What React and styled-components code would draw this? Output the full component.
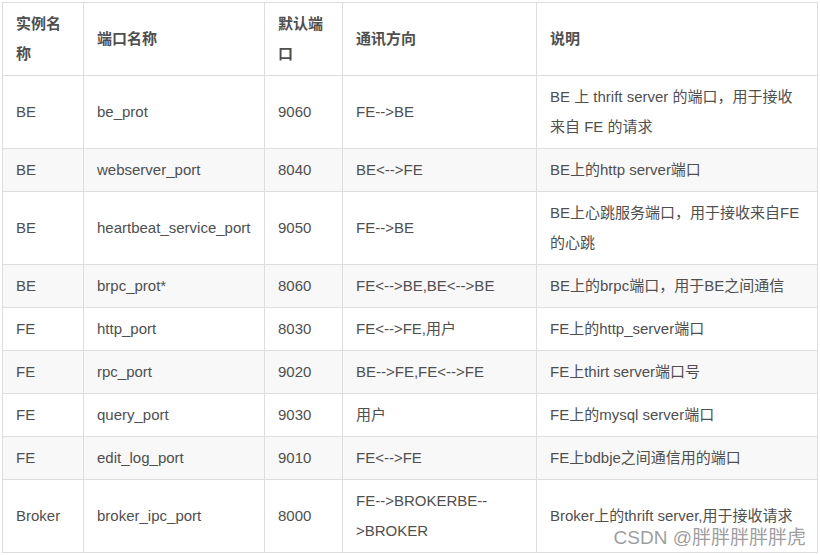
import React from 'react';
import styled, { createGlobalStyle } from 'styled-components';

const GlobalStyle = createGlobalStyle`
	html, body {
		margin: 0;
		padding: 0;
		background: #ffffff;
	}
	body {
		font-family: "Liberation Sans", Arial, "Noto Sans CJK SC", sans-serif;
	}
`;

const columns = [81, 181, 78, 194, 281];

const headers = ['实例名称', '端口名称', '默认端口', '通讯方向', '说明'];

const rows = [
	['BE', 'be_prot', '9060', 'FE-->BE', 'BE 上 thrift server 的端口，用于接收来自 FE 的请求'],
	['BE', 'webserver_port', '8040', 'BE<-->FE', 'BE上的http server端口'],
	['BE', 'heartbeat_service_port', '9050', 'FE-->BE', 'BE上心跳服务端口，用于接收来自FE的心跳'],
	['BE', 'brpc_prot*', '8060', 'FE<-->BE,BE<-->BE', 'BE上的brpc端口，用于BE之间通信'],
	['FE', 'http_port', '8030', 'FE<-->FE,用户', 'FE上的http_server端口'],
	['FE', 'rpc_port', '9020', 'BE-->FE,FE<-->FE', 'FE上thirt server端口号'],
	['FE', 'query_port', '9030', '用户', 'FE上的mysql server端口'],
	['FE', 'edit_log_port', '9010', 'FE<-->FE', 'FE上bdbje之间通信用的端口'],
	['Broker', 'broker_ipc_port', '8000', 'FE-->BROKERBE-->BROKER', 'Broker上的thrift server,用于接收请求'],
];

const App = () => {
	return (
		<>
			<GlobalStyle />
			<StyledPage>
				<StyledTable>
					<colgroup>
						{columns.map((w, i) => (
							<col key={i} style={{ width: w }} />
						))}
					</colgroup>
					<thead>
						<tr>
							{headers.map((h) => (
								<StyledTh key={h}>{h}</StyledTh>
							))}
						</tr>
					</thead>
					<tbody>
						{rows.map((row, i) => (
							<StyledRow key={i} $striped={i % 2 === 1}>
								{row.map((cell, j) => (
									<StyledTd key={j}>{cell}</StyledTd>
								))}
							</StyledRow>
						))}
					</tbody>
				</StyledTable>
				<StyledMark>CSDN @胖胖胖胖胖虎</StyledMark>
			</StyledPage>
		</>
	);
};

export default App;

const StyledPage = styled.div`
	position: relative;
	width: 820px;
	height: 555px;
	padding: 2px 0 0 2px;
	box-sizing: border-box;
	overflow: hidden;
`;

const StyledTable = styled.table`
	border-collapse: collapse;
	table-layout: fixed;
	width: 815px;
	font-size: 15px;
	line-height: 30px;
	color: #4f4f4f;
`;

const StyledTh = styled.th`
	border: 1px solid #dddddd;
	padding: 6px 13px;
	text-align: left;
	vertical-align: middle;
	font-weight: bold;
	background: #ffffff;
`;

const StyledRow = styled.tr`
	background: ${({ $striped }) => ($striped ? '#f8f8f8' : '#ffffff')};
`;

const StyledTd = styled.td`
	border: 1px solid #dddddd;
	padding: 6px 13px;
	vertical-align: middle;
	word-wrap: break-word;
`;

const StyledMark = styled.div`
	position: absolute;
	right: 14px;
	bottom: 6px;
	font-size: 19px;
	line-height: 23px;
	color: rgba(140, 140, 140, 0.85);
	text-shadow: 0 0 1px rgba(255, 255, 255, 0.8);
	pointer-events: none;
`;
